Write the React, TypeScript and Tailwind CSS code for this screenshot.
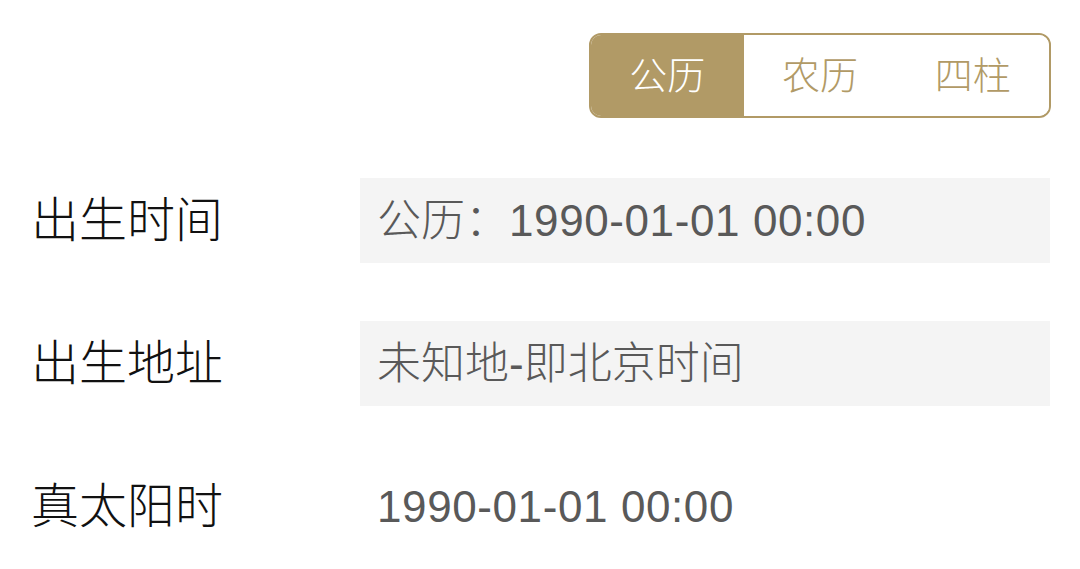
import React from "react";

const font = { fontFamily: '"Liberation Sans", "Noto Sans CJK SC", sans-serif' };

const tabs = ["公历", "农历", "四柱"];

export default function App() {
  const active = 0;

  return (
    <div className="w-[1080px] h-[569px] bg-white overflow-hidden" style={font}>
      {/* Calendar switch */}
      <div className="flex justify-end pt-[33px] pr-[29px]">
        <div className="grid grid-cols-3 w-[462px] h-[85px] rounded-[12px] border-2 border-[#b19a66] overflow-hidden">
          {tabs.map((t, i) => (
            <div
              key={t}
              className={
                i === active
                  ? "flex items-center justify-center bg-[#b19a66] text-white text-[38px] font-light leading-none"
                  : "flex items-center justify-center bg-white text-[#b19a66] text-[38px] font-light leading-none"
              }
            >
              {t}
            </div>
          ))}
        </div>
      </div>

      {/* Form rows */}
      <div className="mt-[60px] flex flex-col gap-[58px] pl-[31px] pr-[30px]">
        <div className="flex items-center h-[85px]">
          <div className="w-[329px] text-[48px] font-light leading-none text-[#111]">出生时间</div>
          <div className="flex-1 h-full flex items-center bg-[#f4f4f4] pl-[17px] text-[44px] font-light leading-none text-[#595959]">
            公历：<span className="tracking-[0.6px]">1990-01-01 00:00</span>
          </div>
        </div>
        <div className="flex items-center h-[85px]">
          <div className="w-[329px] text-[48px] font-light leading-none text-[#111]">出生地址</div>
          <div className="flex-1 h-full flex items-center bg-[#f4f4f4] pl-[17px] text-[44px] font-light leading-none text-[#595959]">
            未知地-即北京时间
          </div>
        </div>
        <div className="flex items-center h-[85px]">
          <div className="w-[329px] text-[48px] font-light leading-none text-[#111]">真太阳时</div>
          <div className="flex-1 h-full flex items-center pl-[17px] text-[44px] font-light leading-none text-[#595959]">
            <span className="tracking-[0.6px]">1990-01-01 00:00</span>
          </div>
        </div>
      </div>
    </div>
  );
}
